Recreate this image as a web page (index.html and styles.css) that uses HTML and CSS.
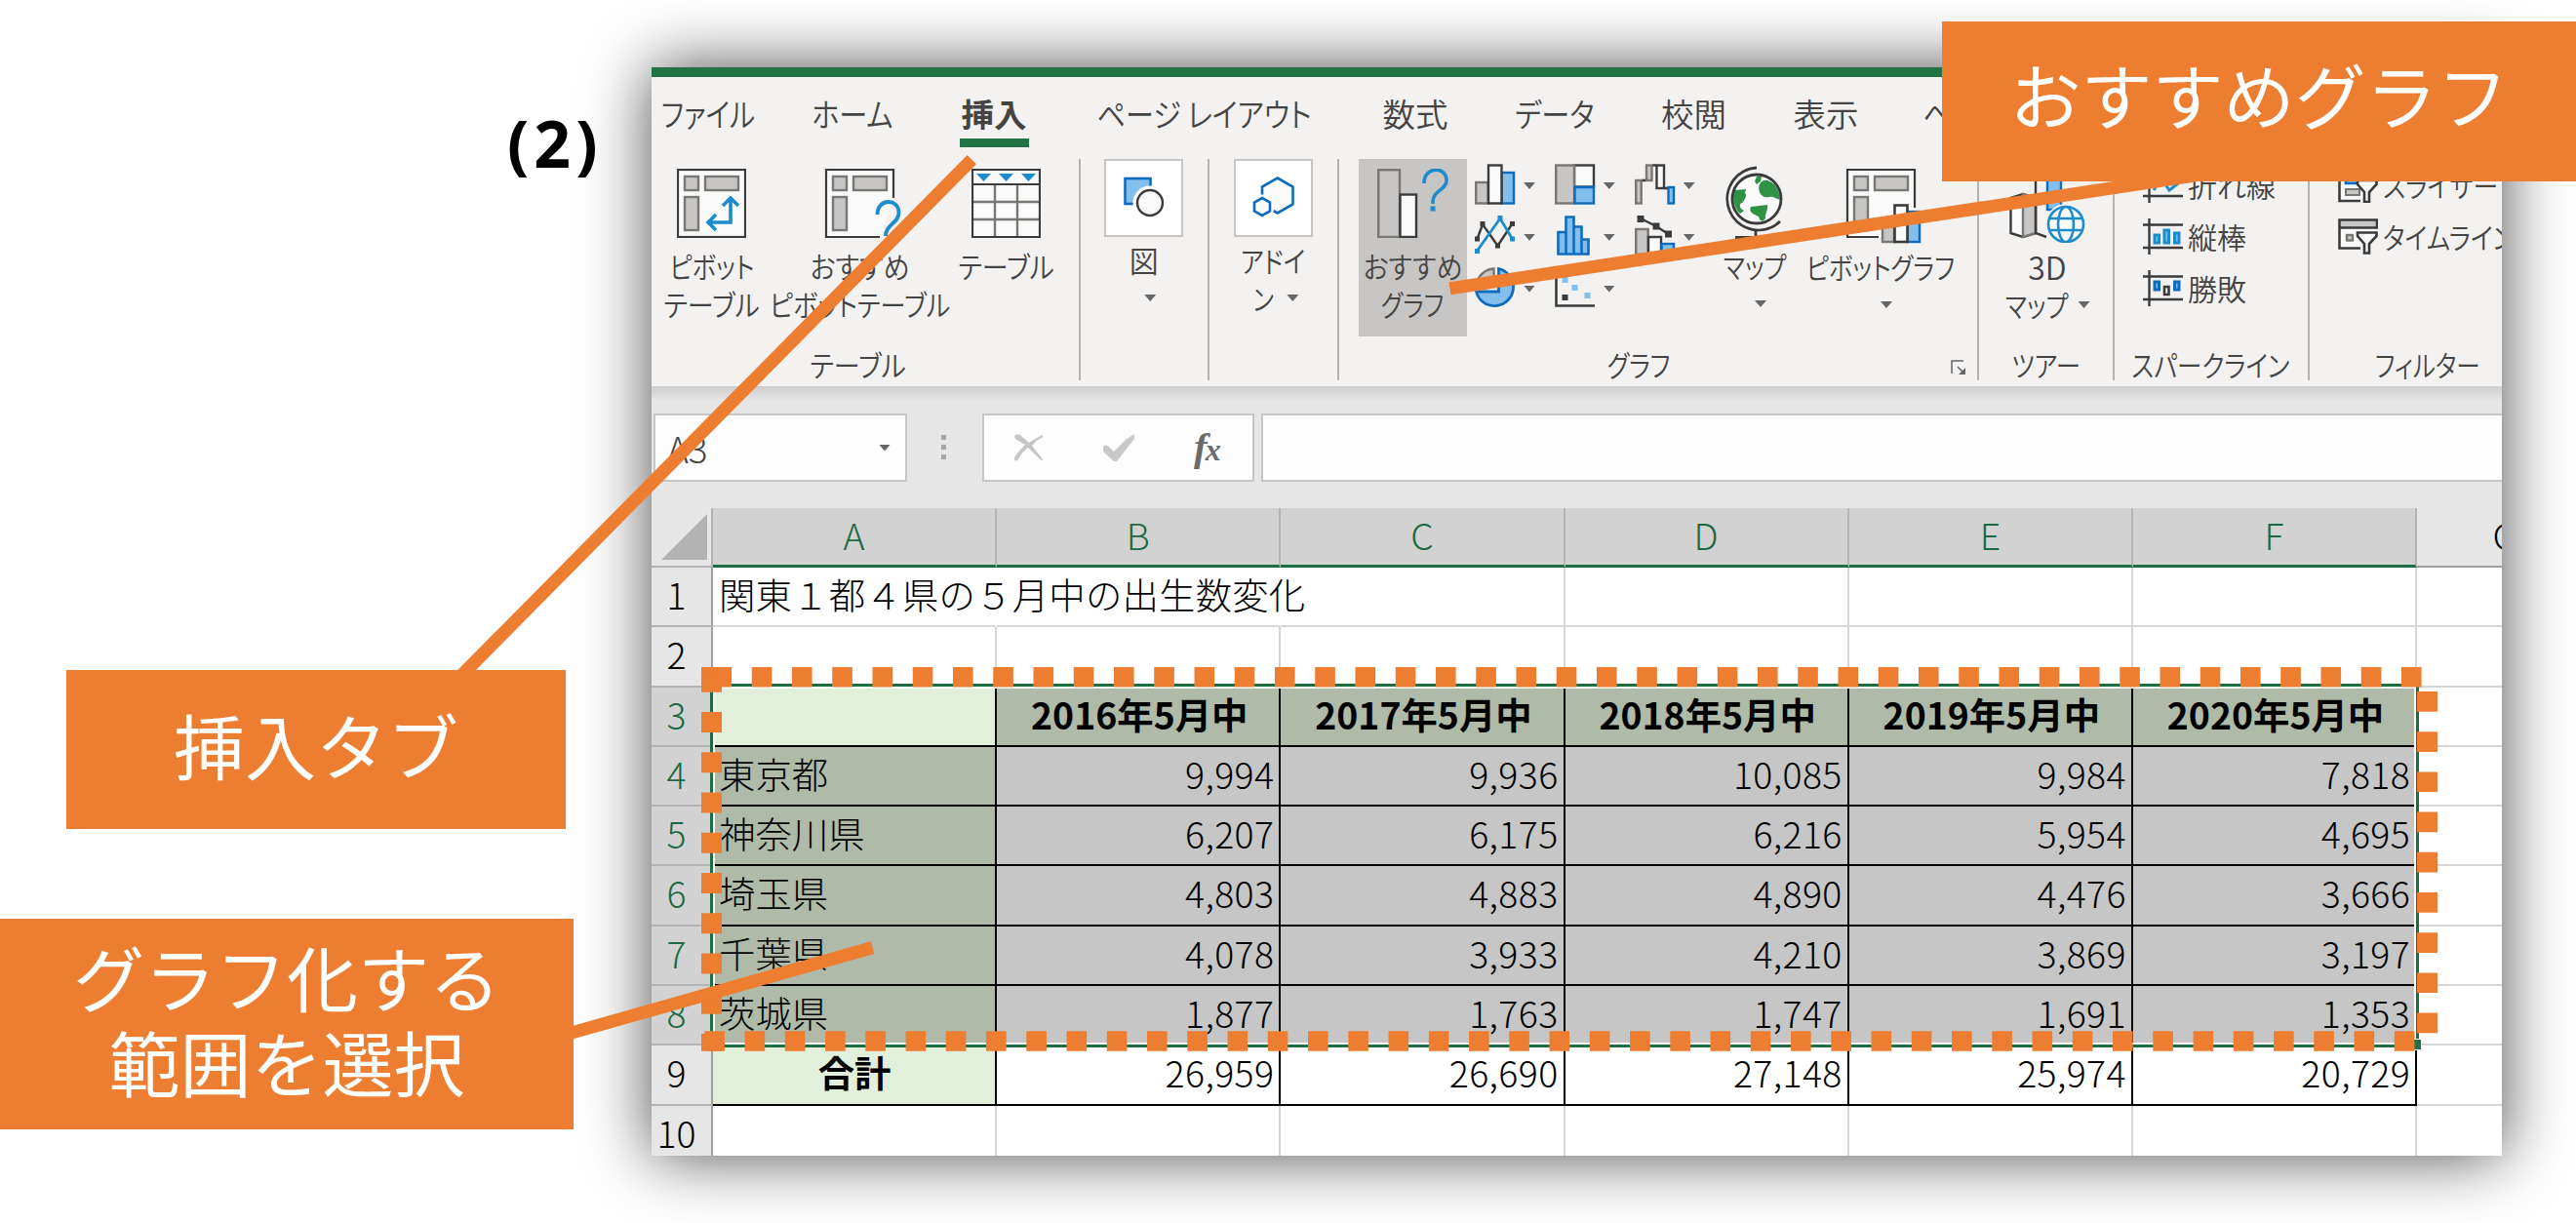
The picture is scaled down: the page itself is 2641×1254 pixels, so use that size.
FILE: index.html
```
<!DOCTYPE html>
<html lang="ja">
<head>
<meta charset="utf-8">
<title>グラフの挿入</title>
<link rel="stylesheet" href="styles.css">
</head>
<body>
<div class="slide">
  <div class="step">(2)</div>

  <main class="window">
    <div class="titlebar"></div>
    <nav class="tabs">
      <span class="tab"><i class="k file">ファイル</i></span>
      <span class="tab"><i class="k">ホーム</i></span>
      <span class="tab active">挿入</span>
      <span class="tab"><i class="k">ページ レイアウト</i></span>
      <span class="tab">数式</span>
      <span class="tab"><i class="k">データ</i></span>
      <span class="tab">校閲</span>
      <span class="tab">表示</span>
      <span class="tab"><i class="k">ヘルプ</i></span>
    </nav>

    <div class="ribbon">
      <section class="group g-table">
        <div class="tools">
          <div class="tool">
            <svg class="ico" width="71" height="71" viewBox="0 0 71 71" fill="none">
              <rect x="1" y="1" width="69" height="69" fill="#fafafa" stroke="#3b3b3b" stroke-width="2.2"/>
              <g fill="#c8c6c4" stroke="#797774" stroke-width="2.4"><rect x="8" y="8" width="14" height="14"/><rect x="29" y="8" width="34" height="14"/><rect x="8" y="29" width="14" height="34"/></g>
              <path d="M55 30V55H32M47 38l8-8 8 8M40 47l-8 8 8 8" stroke="#1e8bcd" stroke-width="3.6"/>
            </svg>
            <i class="k s84">ピボット</i><i class="k s90">テーブル</i>
          </div>
          <div class="tool">
            <svg class="ico" width="71" height="71" viewBox="0 0 71 71" fill="none" overflow="visible">
              <path d="M1 1H70V30L57 70H1Z" fill="#fafafa"/>
              <path d="M70 30V1H1V70H56" stroke="#3b3b3b" stroke-width="2.2"/>
              <g fill="#c8c6c4" stroke="#797774" stroke-width="2.4"><rect x="8" y="8" width="14" height="14"/><rect x="29" y="8" width="34" height="14"/><rect x="8" y="29" width="14" height="34"/></g>
              <path d="M53.500 47C53.500 30 75.500 30 75.500 45C75.500 56 62 57 62 69" stroke="#1e8bcd" stroke-width="3.8"/>
            </svg>
            <i class="k s90">おすすめ</i><i class="k s87">ピボットテーブル</i>
          </div>
          <div class="tool">
            <svg class="ico" width="71" height="71" viewBox="0 0 71 71" fill="none">
              <rect x="1" y="1" width="69" height="69" fill="#fafafa"/>
              <path d="M2 34H69M2 52H69M24 17V69M47 17V69" stroke="#797774" stroke-width="2.4"/>
              <path d="M1 16H70M1 1H70V70H1Z" stroke="#3b3b3b" stroke-width="2.2"/>
              <path d="M5 5H20L12.500 13ZM28 5H43L35.500 13ZM51 5H66L58.500 13Z" fill="#1e8bcd"/>
            </svg>
            <i class="k s90">テーブル</i>
          </div>
        </div>
        <div class="caption"><i class="k s90">テーブル</i></div>
      </section>

      <section class="group g-shape">
        <div class="tile">
          <svg width="81" height="80" viewBox="0 0 81 80" fill="none">
            <rect x="21.500" y="20" width="26" height="26" fill="#83beec" stroke="#0f6cbd" stroke-width="2.600"/>
            <circle cx="47" cy="45" r="17.500" fill="#fff"/>
            <circle cx="47" cy="45" r="13" fill="#fafafa" stroke="#3b3b3b" stroke-width="2.400"/>
          </svg>
        </div>
        <span class="line kanji">図</span>
        <span class="line arrowline"><b class="dd"></b></span>
      </section>

      <section class="group g-addin">
        <div class="tile">
          <svg width="81" height="80" viewBox="0 0 81 80" fill="none" stroke="#0f6cbd" stroke-width="2.600">
            <path d="M44.700 19.500L60.500 28.500V46.500L44.700 55.500L29 46.500V28.500Z" fill="#fafafa"/>
            <circle cx="29" cy="49" r="12.500" fill="#fff" stroke="none"/>
            <path d="M29 40L37 44.500V53.500L29 58L21 53.500V44.500Z" fill="#fafafa"/>
          </svg>
        </div>
        <span class="line"><i class="k s85">アドイ</i></span>
        <span class="line second"><i class="k s80">ン</i><b class="dd"></b></span>
      </section>

      <section class="group g-chart">
        <div class="tools">
          <div class="tool hot">
            <svg class="ico" width="73" height="71" viewBox="0 0 73 71" fill="none">
              <rect x="1.200" y="1.200" width="21.800" height="68.800" fill="#c8c6c4" stroke="#797774" stroke-width="2.400"/>
              <rect x="23.500" y="26.500" width="16.500" height="43.500" fill="#fafafa" stroke="#3b3b3b" stroke-width="2.400"/>
              <path d="M48 15C48 -3 71 -3 71 12C71 22 57 22 57 34V36" stroke="#1e8bcd" stroke-width="3.600"/>
              <rect x="54.500" y="38.500" width="5" height="5" fill="#1e8bcd"/>
            </svg>
            <i class="k s90">おすすめ</i><i class="k s83">グラフ</i>
          </div>
          <div class="minis">
            <span class="mini"><svg width="42" height="42" viewBox="0 0 42 42" stroke-width="2.400"><rect x="1.200" y="19" width="12.500" height="21.500" fill="#c8c6c4" stroke="#797774"/><rect x="27.500" y="9" width="12.500" height="31.500" fill="#83beec" stroke="#0f6cbd"/><rect x="14" y="1.500" width="13.500" height="39" fill="#fafafa" stroke="#3b3b3b"/></svg><b class="dd"></b></span>
            <span class="mini"><svg width="42" height="42" viewBox="0 0 42 42" stroke-width="2.400"><rect x="20" y="1.500" width="20" height="22" fill="#fafafa" stroke="#3b3b3b"/><rect x="1.200" y="1.500" width="18.800" height="39" fill="#c8c6c4" stroke="#797774"/><rect x="20.500" y="24" width="19.500" height="16.500" fill="#83beec" stroke="#0f6cbd"/></svg><b class="dd"></b></span>
            <span class="mini"><svg width="42" height="42" viewBox="0 0 42 42" stroke-width="2.400"><path d="M7 17H11M18 1.500H22M30 25H34" stroke="#3b3b3b"/><rect x="1.200" y="17" width="5.500" height="23.500" fill="#c8c6c4" stroke="#797774"/><rect x="12" y="1.500" width="5.500" height="15.500" fill="#c8c6c4" stroke="#797774"/><rect x="22.500" y="1.500" width="7.500" height="23.500" fill="#fafafa" stroke="#3b3b3b"/><rect x="34.500" y="24" width="5.500" height="16.500" fill="#83beec" stroke="#0f6cbd"/></svg><b class="dd"></b></span>
            <span class="mini"><svg width="42" height="42" viewBox="0 0 42 42" fill="none" stroke-width="2.400"><path d="M2.500 24L8 9L23.500 31L38 9" stroke="#3b3b3b"/><path d="M0 21.500h5v5h-5zM5.500 6h5v5h-5zM21 28.500h5v5h-5zM36 6h5v5h-5z" fill="#3b3b3b"/><path d="M2.500 36L26 3L38.500 24" stroke="#1e8bcd" stroke-width="2.800"/><path d="M0 34h5v5h-5zM23.500 0h5v5h-5zM36 21.500h5v5h-5z" fill="#1e8bcd"/></svg><b class="dd"></b></span>
            <span class="mini"><svg width="42" height="42" viewBox="0 0 42 42" fill="#83beec" stroke="#0f6cbd" stroke-width="2.600"><path d="M3.500 17H11.500V39.500H3.500ZM11.500 1.500H19.500V39.500H11.500ZM19.500 11.500H27.500V39.500H19.500ZM27.500 24.500H34.500V39.500H27.500Z"/></svg><b class="dd"></b></span>
            <span class="mini"><svg width="42" height="42" viewBox="0 0 42 42" stroke-width="2.400"><rect x="1.200" y="14" width="12.500" height="26" fill="#c8c6c4" stroke="#797774"/><rect x="14" y="22" width="13" height="18" fill="#fafafa" stroke="#3b3b3b"/><rect x="27.500" y="29" width="12.500" height="11" fill="#83beec" stroke="#0f6cbd"/><path d="M6 3L22 11L34.500 19" fill="none" stroke="#3b3b3b"/><path d="M2.500 0h7v7h-7zM18.500 7.500h7v7h-7zM31 15.500h7v7h-7z" fill="#3b3b3b"/></svg><b class="dd"></b></span>
            <span class="mini"><svg width="42" height="42" viewBox="0 0 42 42" stroke-width="2.400"><path d="M19.500 1.500A19 19 0 0 0 1.500 19.500H19.500Z" fill="#c8c6c4" stroke="#797774"/><path d="M24.500 1.500V25H1.500A19.300 19.300 0 1 0 24.500 1.500Z" fill="#83beec" stroke="#0f6cbd" stroke-width="2.800"/></svg><b class="dd"></b></span>
            <span class="mini"><svg width="42" height="42" viewBox="0 0 42 42"><path d="M1.500 0V39.500H41" fill="none" stroke="#3b3b3b" stroke-width="2.600"/><path d="M7.500 10h6v6h-6zM17.500 18h6v6h-6zM30.500 26h6v6h-6z" fill="#83beec"/><path d="M7.500 28h6v6h-6z" fill="#3b3b3b"/></svg><b class="dd"></b></span>
          </div>
          <div class="tool map">
            <svg class="ico" width="62" height="76" viewBox="0 0 62 76" fill="none">
              <circle cx="33" cy="34" r="25" fill="#fafafa"/>
              <path d="M36 19C38 14 44 14 46 16C52 18 56 24 57 35L52 33C48 30 46 33 41 32C36 30 34 24 36 19ZM10 25L22 24L21 28C24 30 20 36 18 38C14 40 16 44 20 46L16 49C10 44 8 34 10 25ZM27 42L44 40C45 46 41 50 42 54C38 59 36 56 35 52C31 50 24 48 27 42ZM33 11L38 11L37 16L33 19L31 16Z" fill="#2f9245"/>
              <circle cx="33" cy="34" r="25" stroke="#3b3b3b" stroke-width="2.800"/>
              <path d="M33 2A32 32 0 1 0 57 57M32 66V73M11 73.500H54" stroke="#3b3b3b" stroke-width="2.800"/>
            </svg>
            <i class="k s83">マップ</i><span class="line arrowline"><b class="dd"></b></span>
          </div>
          <div class="tool pchart">
            <svg class="ico" width="71" height="76" viewBox="0 0 71 76" fill="none" overflow="visible">
              <rect x="1" y="1" width="69" height="69" fill="#fafafa"/>
              <path d="M70 40V1H1V70H33" stroke="#3b3b3b" stroke-width="2.200"/>
              <g fill="#c8c6c4" stroke="#797774" stroke-width="2.400"><rect x="8" y="8" width="14" height="14"/><rect x="29" y="8" width="34" height="14"/><rect x="8" y="29" width="14" height="34"/><rect x="37" y="56" width="12" height="19"/></g>
              <rect x="62.500" y="44" width="12.500" height="31" fill="#83beec" stroke="#0f6cbd" stroke-width="2.400"/>
              <rect x="49.500" y="37.500" width="13" height="37.500" fill="#fafafa" stroke="#3b3b3b" stroke-width="2.600"/>
            </svg>
            <i class="k s84">ピボットグラフ</i><span class="line arrowline"><b class="dd"></b></span>
          </div>
        </div>
        <div class="caption"><i class="k s83">グラフ</i></div>
        <svg class="launcher" width="16" height="16" viewBox="0 0 16 16" fill="none" stroke="#666" stroke-width="1.500"><path d="M1 14V1H13M7 7L14 14"/><path d="M15 8V15H8Z" fill="#666" stroke="none"/></svg>
      </section>

      <section class="group g-tour">
        <div class="tools">
          <div class="tool">
            <svg class="ico" width="78" height="76" viewBox="0 0 78 76" fill="none">
              <path d="M1.500 30L14 26L27 30V66L14 70L1.500 66Z" fill="#fafafa" stroke="#3b3b3b" stroke-width="2.400"/>
              <path d="M14 26L27 30V66L14 70Z" fill="#c8c6c4" stroke="#797774" stroke-width="2.400"/>
              <path d="M27 2V66L38 70" stroke="#3b3b3b" stroke-width="2.400"/>
              <rect x="39" y="0" width="14" height="42" fill="#83beec" stroke="#0f6cbd" stroke-width="2.400"/>
              <circle cx="58" cy="57" r="21" fill="#f3f2f1"/>
              <g stroke="#1e8bcd" stroke-width="2.600" fill="#fafafa"><circle cx="58" cy="57" r="18"/><ellipse cx="58" cy="57" rx="8" ry="18"/><path d="M41 51H75M41 63H75"/></g>
            </svg>
            <span class="line three">3D</span>
            <span class="line"><i class="k s83 inl">マップ</i><b class="dd"></b></span>
          </div>
        </div>
        <div class="caption"><i class="k s85">ツアー</i></div>
      </section>

      <section class="group g-spark">
        <div class="list">
          <div class="item"><svg width="41" height="37" viewBox="0 0 41 37" fill="none"><path d="M6.500 0V37M0 6.500H41M0 30H41" stroke="#3b3b3b" stroke-width="2.400"/><path d="M11 24L19 12L27 24L40 14" stroke="#1e8bcd" stroke-width="3"/></svg><span>折れ線</span></div>
          <div class="item"><svg width="41" height="37" viewBox="0 0 41 37" fill="none"><path d="M6.500 0V37M0 6.500H41M0 30H41" stroke="#3b3b3b" stroke-width="2.400"/><path d="M12 17h4.500v8H12zM22 12h4.500v13H22zM32.500 15h4.500v10h-4.500z" fill="#83beec" stroke="#1e8bcd" stroke-width="3"/></svg><span>縦棒</span></div>
          <div class="item"><svg width="41" height="37" viewBox="0 0 41 37" fill="none"><path d="M6.500 0V37M0 6.500H41M0 30H41" stroke="#3b3b3b" stroke-width="2.400"/><path d="M12 12h4.500v8H12zM32.500 12h4.500v8h-4.500z" fill="#83beec" stroke="#0f6cbd" stroke-width="3"/><path d="M22 17h4.500v8H22z" stroke="#3b3b3b" stroke-width="2.600"/></svg><span>勝敗</span></div>
        </div>
        <div class="caption"><i class="k s85">スパークライン</i></div>
      </section>

      <section class="group g-filter">
        <div class="list">
          <div class="item"><svg width="41" height="37" viewBox="0 0 41 37" fill="none"><path d="M23 35H1.500V2H40V16" fill="#fafafa" stroke="#3b3b3b" stroke-width="2.600"/><path d="M8 9h16v8H8z" fill="#83beec" stroke="#0f6cbd" stroke-width="2.600"/><path d="M8 23h14v6H8z" fill="#c8c6c4" stroke="#797774" stroke-width="2"/><path d="M20 14H39.500V18L32 26V36H27V26L20 18Z" fill="#fafafa" stroke="#3b3b3b" stroke-width="2.600"/></svg><i class="k">スライサー</i></div>
          <div class="item"><svg width="41" height="37" viewBox="0 0 41 37" fill="none"><path d="M23 30.500H1.500V1.500H40V9" fill="#fafafa"/><path d="M1.500 1.500H40V9.500H1.500Z" fill="#c8c6c4"/><path d="M23 30.500H1.500V1.500H40V9.500H1.500" stroke="#3b3b3b" stroke-width="2.600"/><rect x="9" y="17" width="6" height="5.500" fill="#c8c6c4" stroke="#797774" stroke-width="2.400"/><path d="M20 14.500H39.500V18L32 26V35.500H27V26L20 18Z" fill="#fafafa" stroke="#3b3b3b" stroke-width="2.600"/></svg><i class="k">タイムライン</i></div>
        </div>
        <div class="caption"><i class="k s82">フィルター</i></div>
      </section>
    </div>

    <div class="formula">
      <div class="box name"><span>A3</span><b class="dd small"></b></div>
      <div class="dots"><b></b><b></b><b></b></div>
      <div class="box fx">
        <svg width="32" height="30" viewBox="0 0 32 30"><path d="M1 4C2 0 6 1 8 3L16 10C20 7 25 4 30 2L30 4.500C26 6 22 9 19 13L30 27L29 28.500L15 15C11 18 7 22 5 27C3 30 0 28 1 25C4 20 8 16 12 12L2 6Z" fill="#c6c6c6"/></svg>
        <svg width="34" height="30" viewBox="0 0 34 30"><path d="M1 14C3 11 6 13 7 14L12 19C18 13 25 5 33 1L33 6L15 29L12 29L1 19Z" fill="#c9c9c9"/></svg>
        <em>f<small>x</small></em>
      </div>
      <div class="box input"></div>
    </div>

    <div class="sheet">
      <div class="h corner"></div><div class="h c on">A</div><div class="h c on">B</div><div class="h c on">C</div><div class="h c on">D</div><div class="h c on">E</div><div class="h c on">F</div><div class="h c g">G</div>
      <div class="h r">1</div><div class="d open title">関東１都４県の５月中の出生数変化</div><div class="d open"></div><div class="d"></div><div class="d"></div><div class="d"></div><div class="d"></div><div class="d"></div>
      <div class="h r">2</div><div class="d"></div><div class="d"></div><div class="d"></div><div class="d"></div><div class="d"></div><div class="d"></div><div class="d"></div>
      <div class="h r on">3</div><div class="d t mint"></div><div class="d t sage">2016年5月中</div><div class="d t sage">2017年5月中</div><div class="d t sage">2018年5月中</div><div class="d t sage">2019年5月中</div><div class="d t sage">2020年5月中</div><div class="d"></div>
      <div class="h r on">4</div><div class="d t pref">東京都</div><div class="d t n">9,994</div><div class="d t n">9,936</div><div class="d t n">10,085</div><div class="d t n">9,984</div><div class="d t n">7,818</div><div class="d"></div>
      <div class="h r on">5</div><div class="d t pref">神奈川県</div><div class="d t n">6,207</div><div class="d t n">6,175</div><div class="d t n">6,216</div><div class="d t n">5,954</div><div class="d t n">4,695</div><div class="d"></div>
      <div class="h r on">6</div><div class="d t pref">埼玉県</div><div class="d t n">4,803</div><div class="d t n">4,883</div><div class="d t n">4,890</div><div class="d t n">4,476</div><div class="d t n">3,666</div><div class="d"></div>
      <div class="h r on">7</div><div class="d t pref">千葉県</div><div class="d t n">4,078</div><div class="d t n">3,933</div><div class="d t n">4,210</div><div class="d t n">3,869</div><div class="d t n">3,197</div><div class="d"></div>
      <div class="h r on">8</div><div class="d t pref">茨城県</div><div class="d t n">1,877</div><div class="d t n">1,763</div><div class="d t n">1,747</div><div class="d t n">1,691</div><div class="d t n">1,353</div><div class="d"></div>
      <div class="h r">9</div><div class="d t mint total">合計</div><div class="d t n sum">26,959</div><div class="d t n sum">26,690</div><div class="d t n sum">27,148</div><div class="d t n sum">25,974</div><div class="d t n sum">20,729</div><div class="d"></div>
      <div class="h r ten">10</div><div class="d"></div><div class="d"></div><div class="d"></div><div class="d"></div><div class="d"></div><div class="d"></div><div class="d"></div>
      <div class="selection"></div>
    </div>
  </main>

  <svg class="marks" width="2641" height="1254" viewBox="0 0 2641 1254" fill="none" stroke="#ed7d31">
    <path d="M719 694.300H730" stroke-width="20.600"/>
    <path d="M729.500 694.300H2482.600" stroke-width="20.600" stroke-dasharray="20.600 20.650"/>
    <path d="M729.500 688.800V1077.800" stroke-width="21" stroke-dasharray="20.900 20.350"/>
    <path d="M722.300 1067.500H2476" stroke-width="20.600" stroke-dasharray="20.600 20.650"/>
    <path d="M2488.500 709V1060" stroke-width="21" stroke-dasharray="20.700 20.500"/>
    <path d="M996.300 163.700L440 726" stroke-width="13.200"/>
    <path d="M1486.500 295.800L2250 180" stroke-width="13.200"/>
    <path d="M894.600 971.700L570 1063.500" stroke-width="13.200"/>
  </svg>
  <div class="callout c-tab">挿入タブ</div>
  <div class="callout c-range">グラフ化する<br>範囲を選択</div>
  <div class="callout c-reco">おすすめグラフ</div>
</div>
</body>
</html>
```
FILE: styles.css
```
* { box-sizing: border-box; }
body {
  margin: 0;
  background: #fff;
  font-family: "Noto Sans CJK JP", sans-serif;
}
i { font-style: normal; }

.slide {
  position: relative;
  width: 2641px;
  height: 1254px;
  overflow: hidden;
  padding: 69px 0 0 668px;
}

.step {
  position: absolute;
  left: 520px;
  top: 101px;
  font: 700 66px/90px "Noto Sans", "Open Sans", sans-serif;
  letter-spacing: 5px;
}

/* Application window */
.window {
  width: 1897px;
  height: 1116px;
  overflow: hidden;
  background: #e6e6e6;
}
.slide::before {
  content: "";
  position: absolute;
  left: 668px;
  top: 69px;
  width: 1897px;
  height: 1116px;
  z-index: -1;
  box-shadow: 0 0 64px rgba(0, 0, 0, .7);
}
.titlebar { height: 10px; background: #217346; }

.k {
  display: inline-block;
  white-space: nowrap;
  font-feature-settings: "palt";
  transform: scaleX(.87);
}
.s80 { transform: scaleX(.8); }
.s82 { transform: scaleX(.82); }
.s83 { transform: scaleX(.83); }
.s84 { transform: scaleX(.84); }
.s85 { transform: scaleX(.85); }
.s90 { transform: scaleX(.9); }

.tabs {
  display: grid;
  grid-template-columns: 116px 180px 110px 320px 114px 172px 113px 158px 124px;
  height: 84px;
  background: #f3f2f1;
  color: #444;
  font-size: 33.500px;
  font-weight: 350;
  line-height: 74px;
}
.tab {
  position: relative;
  display: flex;
  justify-content: center;
}
.file { transform: scaleX(.83); }
.active { font-weight: 700; }
.active::after {
  content: "";
  position: absolute;
  left: 20px;
  top: 63px;
  width: 71px;
  height: 9px;
  background: #217346;
}

/* Ribbon */
.ribbon {
  display: flex;
  width: 1960px;
  height: 233px;
  background: #f3f2f1;
  color: #444;
  font-size: 30px;
  font-weight: 350;
  line-height: 39px;
}
.group {
  position: relative;
  display: flex;
  flex-direction: column;
  height: 227px;
  border-right: 2px solid #b5b3b1;
}
.g-table { width: 439.500px; padding-right: 14px; }
.g-shape { width: 132.500px; }
.g-addin { width: 133px; }
.g-chart { width: 655.500px; }
.g-tour { width: 139.500px; }
.g-spark { width: 199.500px; }
.g-filter { width: 242px; border: 0; }

.g-shape, .g-addin { align-items: center; }

.tools { display: flex; height: 193px; }
.tool {
  display: flex;
  flex-direction: column;
  align-items: center;
  padding-top: 10px;
}
.ico { flex: none; margin-bottom: 9px; }
.g-table .tool:nth-child(1) { width: 124px; }
.g-table .tool:nth-child(2) { width: 180px; }
.g-table .tool:nth-child(3) { width: 120px; }
.caption {
  height: 33px;
  line-height: 33px;
  margin-top: 2px;
  text-align: center;
}
.caption .k { vertical-align: top; }

.tile {
  width: 81px;
  height: 80px;
  border: 2px solid #c8c6c4;
  background: #fff;
}
.tile svg { display: block; margin: -2px; }
.line {
  display: flex;
  align-items: center;
  justify-content: center;
  height: 39px;
}
.tile + .line { margin-top: 4px; }
.kanji { font-size: 30px; }
.second { gap: 11px; padding-left: 2px; }
.g-shape .arrowline { padding-left: 13px; }
.dd {
  width: 12px;
  height: 7px;
  flex: none;
  background: #666;
  clip-path: polygon(0 0, 100% 0, 50% 100%);
}

.g-chart .tools { padding-left: 20px; }
.hot { width: 111px; height: 182px; background: #c8c6c4; }
.minis {
  display: grid;
  grid-template-columns: repeat(3, 81.800px);
  grid-auto-rows: 52.800px;
  align-content: start;
  width: 254px;
  padding: 5px 0 0 8px;
}
.mini { display: flex; gap: 8px; }
.mini .dd { margin-top: 19px; }
.map { width: 82px; padding-top: 7px; }
.map .ico { margin-bottom: 7px; }
.map .arrowline { padding-left: 12px; }
.pchart { width: 176px; }
.pchart .ico, .g-tour .ico { margin-bottom: 5px; }
.pchart .arrowline { padding-left: 12px; }
.g-chart .caption { padding-right: 40px; }
.launcher { position: absolute; right: 11px; bottom: 5px; }

.g-tour .tool { width: 137px; padding-left: 4px; }
.three { font-size: 32px; }
.inl { margin: 0 3px 0 -6px; }

.list {
  display: flex;
  flex-direction: column;
  height: 193px;
  padding: 0 0 0 29px;
}
.item {
  display: flex;
  flex: none;
  align-items: center;
  gap: 5px;
  height: 53px;
  white-space: nowrap;
}
.item .k { transform-origin: left; transform: scaleX(.86); }
.item svg { flex: none; }

/* Formula bar */
.formula {
  display: flex;
  height: 125px;
  width: 1960px;
  padding: 28px 0 0 2px;
  background: linear-gradient(#cdcdcd, #e6e6e6 15px);
}
.box {
  height: 70px;
  border: 2px solid #c6c6c6;
  background: #fdfdfd;
}
.name {
  display: flex;
  align-items: center;
  justify-content: space-between;
  width: 260px;
  padding: 0 15px 0 12px;
  color: #444;
  font-size: 37px;
  font-weight: 300;
}
.dots {
  display: flex;
  flex-direction: column;
  align-items: center;
  gap: 5px;
  width: 77px;
  padding: 22px 3px 0 0;
}
.dots b { width: 5px; height: 5px; background: #a6a6a6; }
.fx {
  display: flex;
  align-items: center;
  width: 279px;
  margin-right: 7px;
  padding-left: 30px;
}
.fx svg:nth-child(2) { margin-left: 59px; }
.fx em {
  margin-left: 60px;
  color: #6a6a6a;
  font: italic 700 41px/60px "Liberation Serif", serif;
}
.fx small { font-size: 32px; margin-left: -2px; }
.input { flex: 1; }

/* Worksheet */
.sheet {
  position: relative;
  display: grid;
  grid-template-columns: 63px repeat(6, 291.200px) 182px;
  grid-template-rows: 61px repeat(10, 61.300px);
  width: 1993px;
  font-size: 37.400px;
  font-weight: 300;
  line-height: 54px;
  color: #000;
}
.h { background: #e6e6e6; text-align: center; }
.c { border-right: 2px solid #b4b4b4; border-bottom: 2px solid #9f9f9f; line-height: 54px; }
.c.on {
  background: #d2d2d2;
  border-bottom: 3px solid #1a7043;
  color: #1c6a43;
}
.r { border-right: 2px solid #9f9f9f; border-bottom: 2px solid #b4b4b4; padding-right: 10px; }
.r.on { background: #d2d2d2; color: #1c6a43; }
.corner { border-right: 2px solid #b4b4b4; border-bottom: 2px solid #b4b4b4; position: relative; }
.corner::after {
  content: "";
  position: absolute;
  right: 4px;
  bottom: 6px;
  width: 47px;
  height: 47px;
  background: #b2b2b2;
  clip-path: polygon(100% 0, 100% 100%, 0 100%);
}
.d {
  padding: 0 5px 0 6px;
  border-right: 2px solid #d6d6d6;
  border-bottom: 2px solid #d6d6d6;
  background: #fff;
  white-space: nowrap;
}
.open { border-right-color: #fff; }
.title { position: relative; z-index: 1; letter-spacing: .2px; }
.t { border-color: #000; }
.mint { background: #e2efda; }
.sage { background: #afbaa9; text-align: center; font-weight: 700; padding-right: 3px; }
.pref { background: #afbaa9; }
.n { background: #c6c6c6; text-align: right; letter-spacing: .4px; }
.sum { background: #fff; }
.total { text-align: center; font-weight: 700; }
.selection {
  position: absolute;
  left: 60px;
  top: 180px;
  width: 1752px;
  height: 373px;
  border: 3px solid #1a7043;
  box-shadow: inset 0 0 0 2px #fff;
}
.selection::after {
  content: "";
  position: absolute;
  right: -5px;
  bottom: -5px;
  width: 8px;
  height: 10px;
  background: #217346;
  outline: 1px solid #fff;
}

/* Callouts */
.marks { position: absolute; left: 0; top: 0; }
.callout {
  position: absolute;
  display: flex;
  align-items: center;
  justify-content: center;
  text-align: center;
  background: #ed7d31;
  color: #fff;
  font-size: 72px;
  font-weight: 400;
  line-height: 87px;
  white-space: nowrap;
}
.c-tab { left: 68px; top: 687px; width: 512px; height: 163px; padding-bottom: 12px; font-size: 73px; }
.c-range { left: 0; top: 942px; width: 588px; height: 216px; padding-bottom: 13px; font-size: 73px; }
.c-reco { left: 1991px; top: 22px; width: 650px; height: 164px; padding-bottom: 17px; font-size: 73px; }
```
